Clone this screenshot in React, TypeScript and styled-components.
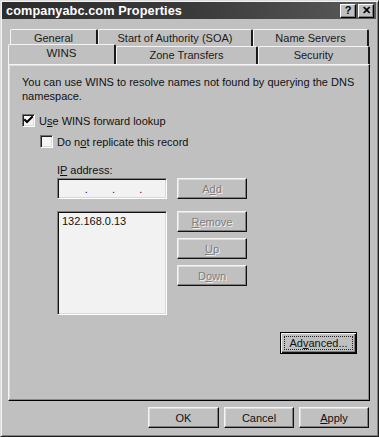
import React from 'react'
import styled, { createGlobalStyle } from 'styled-components'

const GlobalStyle = createGlobalStyle`
  html, body {
    margin: 0;
    padding: 0;
    background: #c0c0c0;
  }
  * {
    box-sizing: border-box;
  }
`

// Tabs
type TabDef = { label: React.ReactNode; width: number }

const backTabs: TabDef[] = [
  { label: 'General', width: 88 },
  { label: 'Start of Authority (SOA)', width: 155 },
  { label: 'Name Servers', width: 116 },
]

const frontTabs: TabDef[] = [
  { label: 'WINS', width: 108 },
  { label: 'Zone Transfers', width: 142 },
  { label: 'Security', width: 112 },
]

function Check(): JSX.Element {
  return (
    <svg width='9' height='9' viewBox='0 0 9 9'>
      <path d='M1 4 L3 6 L8 1' stroke='#000' strokeWidth='2' fill='none' strokeLinecap='square' />
    </svg>
  )
}

export default function App(): JSX.Element {
  return (
    <>
      <GlobalStyle />
      <Window>
        <TitleBar>
          <Title>companyabc.com Properties</Title>
          <TitleButtons>
            <CaptionButton>?</CaptionButton>
            <CaptionButton>✕</CaptionButton>
          </TitleButtons>
        </TitleBar>

        <Body>
          <TabRow $offset={2}>
            {backTabs.map((t, i) => (
              <Tab key={i} $width={t.width}>
                {t.label}
              </Tab>
            ))}
          </TabRow>
          <TabRow $offset={0}>
            {frontTabs.map((t, i) => (
              <Tab key={i} $width={t.width} $active={i === 0}>
                {t.label}
              </Tab>
            ))}
          </TabRow>

          <Panel>
            <Description>
              You can use WINS to resolve names not found by querying the DNS namespace.
            </Description>

            <CheckRow $indent={0} $gap={11}>
              <Box>
                <Check />
              </Box>
              <span>
                U<u>s</u>e WINS forward lookup
              </span>
            </CheckRow>
            <CheckRow $indent={18} $gap={8}>
              <Box />
              <span>
                Do n<u>o</u>t replicate this record
              </span>
            </CheckRow>

            <AddressBlock>
              <Label>
                I<u>P</u> address:
              </Label>
              <AddressGrid>
                <IpField>
                  <IpPart />
                  <Dot>.</Dot>
                  <IpPart />
                  <Dot>.</Dot>
                  <IpPart />
                  <Dot>.</Dot>
                  <IpPart />
                </IpField>
                <Button $disabled>
                  A<u>d</u>d
                </Button>

                <List>
                  <ListItem>132.168.0.13</ListItem>
                </List>
                <ButtonStack>
                  <Button $disabled>
                    <u>R</u>emove
                  </Button>
                  <Button $disabled>
                    <u>U</u>p
                  </Button>
                  <Button $disabled>
                    D<u>o</u>wn
                  </Button>
                </ButtonStack>
              </AddressGrid>
            </AddressBlock>

            <AdvancedRow>
              <DefaultButton>
                <Focus>
                  Ad<u>v</u>anced...
                </Focus>
              </DefaultButton>
            </AdvancedRow>
          </Panel>

          <Footer>
            <Button $width={71}>OK</Button>
            <Button $width={70}>Cancel</Button>
            <Button $width={70}>
              <u>A</u>pply
            </Button>
          </Footer>
        </Body>
      </Window>
    </>
  )
}

const Window = styled.div`
  width: 379px;
  height: 437px;
  background: #c0c0c0;
  border-top: 1px solid #dcdcdc;
  border-left: 1px solid #dcdcdc;
  border-right: 1px solid #202020;
  border-bottom: 1px solid #202020;
  box-shadow: inset 1px 1px 0 #f4f4f4, inset -1px -1px 0 #808080;
  padding: 1px 2px 2px 1px;
  font-family: 'Liberation Sans', Arial, sans-serif;
  font-size: 11px;
  color: #111;
  overflow: hidden;
`

const TitleBar = styled.div`
  height: 17px;
  display: flex;
  align-items: center;
  justify-content: space-between;
  padding: 0 2px 0 4px;
  background: linear-gradient(90deg, #2c2c2c 0%, #3a3a3a 50%, #5a5a5a 100%);
`

const Title = styled.div`
  color: #fff;
  font-weight: bold;
  font-size: 12.7px;
  letter-spacing: 0.1px;
`

const TitleButtons = styled.div`
  display: flex;
  gap: 2px;
`

const CaptionButton = styled.div`
  width: 16px;
  height: 14px;
  background: #c0c0c0;
  border-top: 1px solid #fff;
  border-left: 1px solid #fff;
  border-right: 1px solid #000;
  border-bottom: 1px solid #000;
  box-shadow: inset -1px -1px 0 #808080;
  display: flex;
  align-items: center;
  justify-content: center;
  font-weight: bold;
  font-size: 11px;
  line-height: 1;
  color: #000;
`

const Body = styled.div`
  padding: 10px 6px 0 6px;
`

const TabRow = styled.div<{ $offset: number }>`
  display: flex;
  padding-left: ${(p) => p.$offset}px;
  height: 17px;
  position: relative;
  z-index: ${(p) => (p.$offset ? 0 : 1)};
`

const Tab = styled.div<{ $width: number; $active?: boolean }>`
  width: ${(p) => p.$width}px;
  height: ${(p) => (p.$active ? 20 : 18)}px;
  margin-top: ${(p) => (p.$active ? -2 : 0)}px;
  background: #c0c0c0;
  border-top: 1px solid #f4f4f4;
  border-left: 1px solid #f4f4f4;
  border-right: 2px solid #1a1a1a;
  border-radius: 2px 2px 0 0;
  display: flex;
  align-items: center;
  justify-content: center;
  padding-bottom: ${(p) => (p.$active ? 3 : 1)}px;
  color: #1a1a1a;
  font-size: ${(p) => (p.$active ? 11.5 : 11)}px;
  position: relative;
  z-index: ${(p) => (p.$active ? 2 : 0)};
`

const Panel = styled.div`
  height: 337px;
  margin-top: 1px;
  border-top: 1px solid #f4f4f4;
  border-left: 1px solid #f4f4f4;
  border-right: 1px solid #000;
  border-bottom: 1px solid #000;
  box-shadow: inset -1px -1px 0 #8a8a8a, inset 1px 1px 0 #dcdcdc;
  padding: 10px 12px 0 13px;
  display: flex;
  flex-direction: column;
`

const Description = styled.p`
  margin: 0;
  line-height: 14px;
  width: 345px;
`

const CheckRow = styled.div<{ $indent: number; $gap: number }>`
  display: flex;
  align-items: center;
  gap: 4px;
  margin: ${(p) => p.$gap}px 0 0 ${(p) => p.$indent}px;
`

const Box = styled.div`
  width: 13px;
  height: 13px;
  background: #f4f4f4;
  border-top: 1px solid #707070;
  border-left: 1px solid #707070;
  border-right: 1px solid #fff;
  border-bottom: 1px solid #fff;
  box-shadow: inset 1px 1px 0 #202020, inset -1px -1px 0 #dcdcdc;
  display: flex;
  align-items: center;
  justify-content: center;
`

const AddressBlock = styled.div`
  margin: 15px 0 0 35px;
`

const Label = styled.div`
  line-height: 14px;
  margin-bottom: 1px;
`

const AddressGrid = styled.div`
  display: grid;
  grid-template-columns: 110px 70px;
  grid-template-rows: 21px 104px;
  column-gap: 10px;
  row-gap: 12px;
`

const Sunken = styled.div`
  background: #f2f2f2;
  border-top: 1px solid #808080;
  border-left: 1px solid #808080;
  border-right: 1px solid #fff;
  border-bottom: 1px solid #fff;
  box-shadow: inset 1px 1px 0 #111, inset -1px -1px 0 #d8d8d8;
`

const IpField = styled(Sunken)`
  display: flex;
  align-items: center;
  padding: 0 0 0 3px;
`

const IpPart = styled.div`
  flex: 1;
`

const Dot = styled.span`
  width: 4px;
  text-align: center;
`

const List = styled(Sunken)`
  padding: 2px 4px;
`

const ListItem = styled.div`
  line-height: 14px;
`

const ButtonStack = styled.div`
  display: flex;
  flex-direction: column;
  gap: 6px;
`

const Button = styled.div<{ $disabled?: boolean; $width?: number }>`
  width: ${(p) => (p.$width ? `${p.$width}px` : '100%')};
  height: 21px;
  background: #c0c0c0;
  border-top: 1px solid #f4f4f4;
  border-left: 1px solid #f4f4f4;
  border-right: 1px solid #111;
  border-bottom: 1px solid #111;
  box-shadow: inset -1px -1px 0 #808080, inset 1px 1px 0 #dcdcdc;
  display: flex;
  align-items: center;
  justify-content: center;
  color: ${(p) => (p.$disabled ? '#7e7e7e' : '#111')};
  text-shadow: ${(p) => (p.$disabled ? '1px 1px 0 #f0f0f0' : 'none')};
`

const AdvancedRow = styled.div`
  display: flex;
  justify-content: flex-end;
  margin-top: 17px;
`

const DefaultButton = styled.div`
  width: 77px;
  height: 22px;
  border: 1px solid #000;
  background: #c0c0c0;
  box-shadow: inset 1px 1px 0 #f4f4f4, inset -1px -1px 0 #111, inset -2px -2px 0 #808080;
  padding: 3px;
  display: flex;
`

const Focus = styled.div`
  flex: 1;
  border: 1px dotted #222;
  display: flex;
  align-items: center;
  justify-content: center;
`

const Footer = styled.div`
  display: flex;
  justify-content: flex-end;
  gap: 5px;
  margin-top: 6px;
  padding-right: 1px;
`
